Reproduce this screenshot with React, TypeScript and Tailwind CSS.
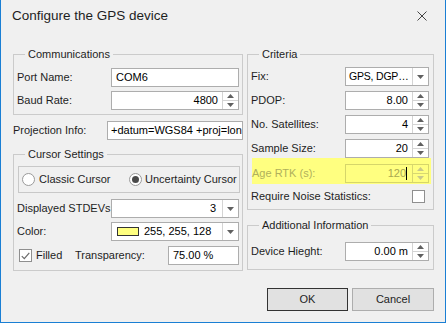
import React from "react";

const font = "font-['Liberation_Sans',Arial,sans-serif]";

function Group({ title, children, className = "" }: { title: string; children: React.ReactNode; className?: string }) {
  return (
    <fieldset className={`border border-[#cbcbcb] ${className}`}>
      <legend className="ml-[8px] px-[3px] h-[16px] leading-[16px] text-[11px] text-[#1e1e1e]">{title}</legend>
      {children}
    </fieldset>
  );
}

function Spinner({ faded }: { faded?: boolean }) {
  const c = faded ? "border-[#d8d870]" : "border-[#d4d4d4]";
  const a = faded ? "#c8c88a" : "#606060";
  return (
    <div className={`w-[16px] shrink-0 h-full flex flex-col border-l ${c}`}>
      <div className={`flex-1 flex items-center justify-center border-b ${c}`}>
        <svg width="7" height="4" viewBox="0 0 7 4"><path d="M0 4 L3.5 0 L7 4 Z" fill={a} /></svg>
      </div>
      <div className="flex-1 flex items-center justify-center">
        <svg width="7" height="4" viewBox="0 0 7 4"><path d="M0 0 L3.5 4 L7 0 Z" fill={a} /></svg>
      </div>
    </div>
  );
}

function DropBtn() {
  return (
    <div className="w-[16px] shrink-0 h-full flex items-center justify-center border-l border-[#d4d4d4]">
      <svg width="7" height="4" viewBox="0 0 7 4"><path d="M0 0 L3.5 4 L7 0 Z" fill="#606060" /></svg>
    </div>
  );
}

function Box({ w, children, className = "" }: { w: string; children: React.ReactNode; className?: string }) {
  return (
    <div className={`${w} shrink-0 h-[19px] flex items-stretch border border-[#adadad] bg-white overflow-hidden ${className}`}>
      {children}
    </div>
  );
}

function Row({ label, lw, children, className = "" }: { label: string; lw: string; children: React.ReactNode; className?: string }) {
  return (
    <div className={`flex items-center h-[19px] ${className}`}>
      <span className={`${lw} shrink-0 text-[11px] text-[#1e1e1e] whitespace-nowrap`}>{label}</span>
      {children}
    </div>
  );
}

function SpinRow({ label, value, lw, w, className = "" }: { label: string; value: string; lw: string; w: string; className?: string }) {
  return (
    <Row label={label} lw={lw} className={className}>
      <Box w={w}>
        <span className="flex-1 min-w-0 text-right pr-[4px] text-[11px] leading-[17px] text-black">{value}</span>
        <Spinner />
      </Box>
    </Row>
  );
}

function Radio({ checked }: { checked?: boolean }) {
  return (
    <span className="w-[13px] h-[13px] shrink-0 rounded-full border border-[#9a9a9a] bg-white flex items-center justify-center">
      {checked && <span className="w-[7px] h-[7px] rounded-full bg-[#4a4a4a]" />}
    </span>
  );
}

export default function App() {
  return (
    <div className={`w-[446px] h-[323px] bg-[#f0f0f0] border-x border-b border-[#1a7fd4] flex flex-col overflow-hidden ${font}`}>
      <div className="h-[32px] flex items-center justify-between pl-[11px] pr-[18px]">
        <span className="text-[13.5px] text-[#1e1e1e]">Configure the GPS device</span>
        <svg width="10" height="10" viewBox="0 0 10 10">
          <path d="M0.5 0.5 L9.5 9.5 M9.5 0.5 L0.5 9.5" stroke="#444" strokeWidth="1" />
        </svg>
      </div>

      <div className="flex gap-[4px] pl-[12px] pt-[14px]">
        {/* left column */}
        <div className="w-[230px] flex flex-col">
          <Group title="Communications" className="px-[3px] pb-[4px]">
            <Row label="Port Name:" lw="w-[94px]" className="mt-[6px]">
              <Box w="w-[128px]">
                <span className="pl-[4px] text-[11px] leading-[17px] text-black">COM6</span>
              </Box>
            </Row>
            <SpinRow label="Baud Rate:" value="4800" lw="w-[94px]" w="w-[128px]" className="mt-[4px]" />
          </Group>

          <Row label="Projection Info:" lw="w-[94px]" className="mt-[6px]">
            <Box w="w-[136px]">
              <span className="flex-1 min-w-0 overflow-hidden pl-[3px] text-[11px] leading-[17px] text-black whitespace-nowrap">+datum=WGS84 +proj=lon</span>
            </Box>
          </Row>

          <Group title="Cursor Settings" className="px-[3px] pb-[5px] mt-[6px]">
            <div className="mt-[4px] ml-[1px] mr-[-1px] h-[27px] border border-[#c8c8c8] flex items-center pl-[3px] overflow-hidden whitespace-nowrap text-[11px] text-[#1e1e1e]">
              <div className="w-[107px] shrink-0 flex items-center gap-[4px]">
                <Radio />
                <span>Classic Cursor</span>
              </div>
              <div className="flex items-center gap-[3px]">
                <Radio checked />
                <span>Uncertainty Cursor</span>
              </div>
            </div>
            <Row label="Displayed STDEVs:" lw="w-[94px]" className="mt-[6px]">
              <Box w="w-[128px]">
                <span className="flex-1 min-w-0 text-right pr-[6px] text-[11px] leading-[17px] text-black">3</span>
                <DropBtn />
              </Box>
            </Row>
            <Row label="Color:" lw="w-[94px]" className="mt-[4px]">
              <Box w="w-[128px]">
                <span className="flex-1 min-w-0 flex items-center pl-[5px] gap-[5px] text-[11px] text-black whitespace-nowrap">
                  <span className="w-[22px] h-[9px] shrink-0 border border-[#333] bg-[#ffff80]" />
                  255, 255, 128
                </span>
                <DropBtn />
              </Box>
            </Row>
            <div className="flex items-center h-[19px] mt-[5px] text-[11px] text-[#1e1e1e]">
              <span className="ml-[2px] w-[13px] h-[13px] shrink-0 border border-[#8f8f8f] bg-white flex items-center justify-center">
                <svg width="9" height="8" viewBox="0 0 9 8"><path d="M0.8 4.2 L3.3 6.7 L8.3 0.8" stroke="#6a6a6a" strokeWidth="1.2" fill="none" /></svg>
              </span>
              <span className="ml-[4px] w-[39px] shrink-0">Filled</span>
              <span className="w-[93px] shrink-0">Transparency:</span>
              <Box w="w-[71px]">
                <span className="pl-[4px] text-[11px] leading-[17px] text-black">75.00 %</span>
              </Box>
            </div>
          </Group>
        </div>

        {/* right column */}
        <div className="w-[187px] flex flex-col">
          <Group title="Criteria" className="pl-[3px] pr-[4px] pb-[6px]">
            <Row label="Fix:" lw="w-[94px]" className="mt-[5px]">
              <Box w="w-[84px]">
                <span className="flex-1 min-w-0 overflow-hidden pl-[3px] text-[10.5px] tracking-[-0.2px] leading-[17px] text-black whitespace-nowrap">GPS, DGP…</span>
                <DropBtn />
              </Box>
            </Row>
            <SpinRow label="PDOP:" value="8.00" lw="w-[94px]" w="w-[84px]" className="mt-[5px]" />
            <SpinRow label="No. Satellites:" value="4" lw="w-[94px]" w="w-[84px]" className="mt-[5px]" />
            <SpinRow label="Sample Size:" value="20" lw="w-[94px]" w="w-[84px]" className="mt-[5px]" />
            <div className="ml-[1px] mr-[-2px] h-[26px] pt-[6px] bg-[#ffff80]">
              <div className="flex items-center h-[19px]">
                <span className="w-[93px] shrink-0 text-[11px] text-[#b0b05c] whitespace-nowrap">Age RTK (s):</span>
                <div className="w-[84px] h-[19px] flex items-stretch border border-[#d6d66a]">
                  <span className="flex-1 flex items-center justify-end pr-[5px] text-[11px] text-[#a8a850]">
                    120<span className="inline-block w-[1px] h-[13px] bg-black" />
                  </span>
                  <Spinner faded />
                </div>
              </div>
            </div>
            <div className="flex items-center justify-between h-[13px] mt-[6px]">
              <span className="text-[11px] text-[#1e1e1e]">Require Noise Statistics:</span>
              <span className="w-[13px] h-[13px] border border-[#8f8f8f] bg-white mr-[4px]" />
            </div>
          </Group>

          <Group title="Additional Information" className="pl-[3px] pr-[4px] pb-[8px] mt-[7px]">
            <Row label="Device Hieght:" lw="w-[94px]" className="mt-[9px]">
              <Box w="w-[84px]">
                <span className="flex-1 min-w-0 text-right pr-[4px] text-[11px] leading-[17px] text-black">0.00 m</span>
                <Spinner />
              </Box>
            </Row>
          </Group>

          <div className="flex justify-end gap-[4px] mt-[18px]">
            <button className="w-[81px] h-[23px] border border-[#333] bg-[#e1e1e1] text-[11px] text-[#1e1e1e]">OK</button>
            <button className="w-[82px] h-[23px] border border-[#adadad] bg-[#e1e1e1] text-[11px] text-[#1e1e1e]">Cancel</button>
          </div>
        </div>
      </div>
    </div>
  );
}
